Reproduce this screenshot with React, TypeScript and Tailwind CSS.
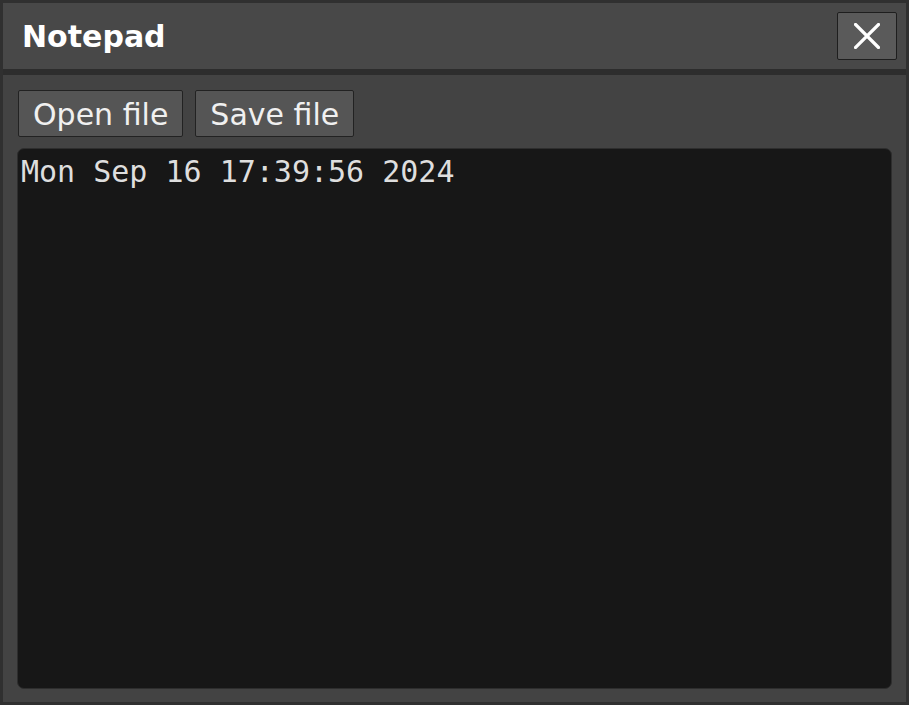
import React from "react";

export default function App() {
  return (
    <div className="w-[909px] h-[705px] bg-[#303030] p-[3px] flex flex-col" style={{ fontFamily: '"DejaVu Sans", sans-serif' }}>
      <div className="h-[66px] shrink-0 bg-[#484848] flex items-center justify-between pl-[19px] pr-[9px]">
        <span className="text-[30px] leading-[35px] font-bold text-white">Notepad</span>
        <button className="w-[60px] h-[48px] bg-[#5a5a5a] border border-[#1e1e1e] rounded-[2px] flex items-center justify-center">
          <svg width="26" height="26" viewBox="0 0 26 26">
            <path d="M1.5 1.5 L24.5 24.5 M24.5 1.5 L1.5 24.5" stroke="#ffffff" strokeWidth="3.2" strokeLinecap="square" />
          </svg>
        </button>
      </div>
      <div className="h-[6px] shrink-0 bg-[#2d2d2d]" />
      <div className="flex-1 bg-[#434343] flex flex-col pt-[15px] pl-[14px] pr-[14px] pb-[13px]">
        <div className="flex gap-[12px] pl-[1px]">
          <button className="h-[47px] px-[14px] pt-[1px] bg-[#555555] border border-[#222222] rounded-[2px] text-[30px] leading-[35px] text-[#f0f0f0]">Open file</button>
          <button className="h-[47px] px-[14px] pt-[1px] bg-[#555555] border border-[#222222] rounded-[2px] text-[30px] leading-[35px] text-[#f0f0f0]">Save file</button>
        </div>
        <div className="mt-[11px] flex-1 bg-[#171717] border border-[#2e2e2e] rounded-[7px] pt-[5px] pl-[3px]">
          <div className="text-[30px] leading-[35px] text-[#dedede] whitespace-pre" style={{ fontFamily: '"DejaVu Sans Mono", monospace' }}>Mon Sep 16 17:39:56 2024</div>
        </div>
      </div>
    </div>
  );
}
